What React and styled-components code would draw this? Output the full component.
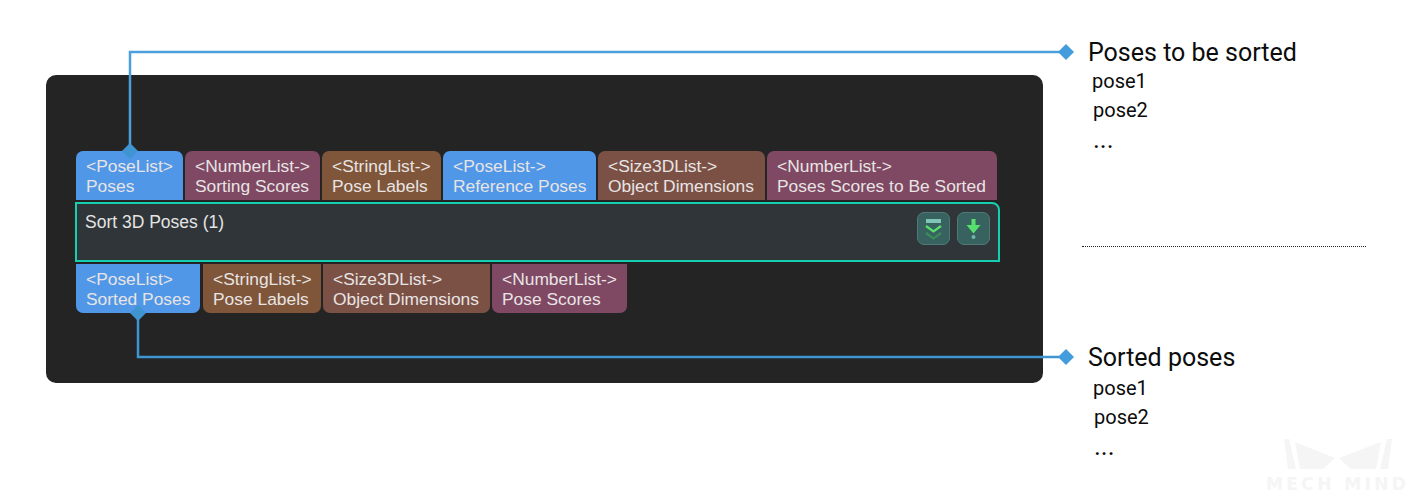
import React from "react";
import styled, { createGlobalStyle } from "styled-components";

const GlobalStyle = createGlobalStyle`
  html, body {
    margin: 0;
    padding: 0;
    background: #fff;
  }
`;

const colors = {
  pose: "#5097e8",
  number: "#7f4863",
  string: "#7f5639",
  size: "#7b5145"
};

const Page = styled.div`
  position: relative;
  display: flex;
  align-items: flex-start;
  width: 1413px;
  height: 496px;
  padding-left: 46px;
  box-sizing: border-box;
  overflow: hidden;
`;

const Panel = styled.div`
  display: flex;
  flex-direction: column;
  gap: 2px;
  width: 997px;
  height: 308px;
  margin-top: 75px;
  padding: 76px 0 0 29px;
  box-sizing: border-box;
  background: #242424;
  border-radius: 10px;
  font-family: "Liberation Sans", Arial, sans-serif;
`;

const TabRow = styled.div`
  display: flex;
  gap: 2px;
  padding-left: 1px;
`;

const Tab = styled.div`
  width: ${props => props.$width}px;
  height: 49px;
  margin-right: ${props => props.$after || 0}px;
  padding: 5px 0 0 10px;
  box-sizing: border-box;
  background: ${props => colors[props.$kind]};
  border-radius: ${props => (props.$bottom ? "0 0 7px 7px" : "7px 7px 0 0")};
  color: #e8e4e4;
  font-size: 17.4px;
  line-height: 20px;
  white-space: nowrap;
`;

const Node = styled.div`
  display: flex;
  justify-content: space-between;
  width: 925px;
  height: 60px;
  padding: 6px 8px 0 8px;
  box-sizing: border-box;
  background: #2f3539;
  border: 2px solid #15d0b0;
  border-radius: 0 8px 0 0;
`;

const NodeTitle = styled.div`
  color: #e4e4e4;
  font-size: 17.5px;
  line-height: 24px;
`;

const NodeButtons = styled.div`
  display: flex;
  gap: 7px;
  padding-top: 2px;
`;

const IconButton = styled.div`
  width: 33px;
  height: 33px;
  box-sizing: border-box;
  background: #37625f;
  border: 1px solid #4d7a76;
  border-radius: 7px;

  & svg {
    display: block;
  }
`;

const Notes = styled.div`
  width: 284px;
  margin-left: 39px;
  padding-top: 39px;
  font-family: Roboto, sans-serif;
  color: #0c0c0c;
`;

const NoteTitle = styled.div`
  padding-left: 6px;
  font-size: 25px;
  line-height: 28px;
`;

const NoteItems = styled.div`
  display: flex;
  flex-direction: column;
  padding-top: ${props => props.$top}px;
`;

const NoteItem = styled.div`
  padding-left: ${props => props.$indent}px;
  height: 29px;
  font-size: 20px;
  line-height: 29px;
`;

const NoteEllipsis = styled(NoteItem)`
  font-size: 26px;
  line-height: 29px;
`;

const Divider = styled.div`
  margin: 92px 0 97px;
  border-top: 1px dotted #222;
`;

const Connectors = styled.svg`
  position: absolute;
  left: 0;
  top: 0;
  pointer-events: none;
`;

const Watermark = styled.div`
  position: absolute;
  left: 1266px;
  top: 439px;
  width: 146px;

  & svg {
    display: block;
    margin-left: 18px;
  }
`;

const WatermarkText = styled.div`
  margin-top: 7px;
  color: #f5f5f5;
  font-family: "DejaVu Sans", sans-serif;
  font-size: 17px;
  font-weight: 700;
  line-height: 14px;
  letter-spacing: 3.400px;
  white-space: nowrap;
`;

const topTabs = [
  { kind: "pose", width: 107, type: "<PoseList>", name: "Poses" },
  { kind: "number", width: 135, type: "<NumberList->", name: "Sorting Scores" },
  { kind: "string", width: 119, type: "<StringList->", name: "Pose Labels" },
  { kind: "pose", width: 153, type: "<PoseList->", name: "Reference Poses" },
  { kind: "size", width: 167, type: "<Size3DList->", name: "Object Dimensions" },
  { kind: "number", width: 230, type: "<NumberList->", name: "Poses Scores to Be Sorted" }
];

const bottomTabs = [
  { kind: "pose", width: 124, after: 1, type: "<PoseList>", name: "Sorted Poses" },
  { kind: "string", width: 118, type: "<StringList->", name: "Pose Labels" },
  { kind: "size", width: 167, type: "<Size3DList->", name: "Object Dimensions" },
  { kind: "number", width: 135, type: "<NumberList->", name: "Pose Scores" }
];

const CollapseIcon = () => (
  <svg width="31" height="31" viewBox="0 0 31 31">
    <rect x="8" y="6" width="15" height="4" fill="#7fc4b4" />
    <path d="M8 13l7.500 5.500 7.500-5.500" fill="none" stroke="#58e06e" strokeWidth="2.200" />
    <path d="M8 20l7.500 5.500 7.500-5.500" fill="none" stroke="#3d8a5c" strokeWidth="2.200" />
  </svg>
);

const DownIcon = () => (
  <svg width="31" height="31" viewBox="0 0 31 31">
    <path d="M13.500 6h4v6h5l-7 8.500-7-8.500h5z" fill="#58e06e" />
    <circle cx="15.500" cy="24" r="2" fill="#6fb5a8" />
  </svg>
);

const App = () => (
  <Page>
    <GlobalStyle />
    <Panel>
      <TabRow>
        {topTabs.map(tab => (
          <Tab key={tab.name} $kind={tab.kind} $width={tab.width}>
            {tab.type}
            <br />
            {tab.name}
          </Tab>
        ))}
      </TabRow>
      <Node>
        <NodeTitle>Sort 3D Poses (1)</NodeTitle>
        <NodeButtons>
          <IconButton>
            <CollapseIcon />
          </IconButton>
          <IconButton>
            <DownIcon />
          </IconButton>
        </NodeButtons>
      </Node>
      <TabRow>
        {bottomTabs.map(tab => (
          <Tab key={tab.name} $kind={tab.kind} $width={tab.width} $after={tab.after} $bottom>
            {tab.type}
            <br />
            {tab.name}
          </Tab>
        ))}
      </TabRow>
    </Panel>
    <Notes>
      <NoteTitle>Poses to be sorted</NoteTitle>
      <NoteItems $top={0}>
        <NoteItem $indent={10}>pose1</NoteItem>
        <NoteItem $indent={11}>pose2</NoteItem>
        <NoteEllipsis $indent={11}>...</NoteEllipsis>
      </NoteItems>
      <Divider />
      <NoteTitle>Sorted poses</NoteTitle>
      <NoteItems $top={2}>
        <NoteItem $indent={11}>pose1</NoteItem>
        <NoteItem $indent={12}>pose2</NoteItem>
        <NoteEllipsis $indent={12}>...</NoteEllipsis>
      </NoteItems>
    </Notes>
    <Connectors width="1413" height="496" viewBox="0 0 1413 496">
      <path d="M130 146V52H1064" fill="none" stroke="#4a9fdc" strokeWidth="2.500" />
      <path d="M130 143l8 8-8 8-8-8z" fill="#3f94d2" />
      <path d="M1066 44l8 8-8 8-8-8z" fill="#439cdb" />
      <path d="M138 318V357H1064" fill="none" stroke="#3f94d2" strokeWidth="2.500" />
      <path d="M138 305l8 8-8 8-8-8z" fill="#3f94d2" />
      <path d="M1066 349l8 8-8 8-8-8z" fill="#439cdb" />
    </Connectors>
    <Watermark>
      <svg width="110" height="31" viewBox="0 0 110 31">
        <path d="M0 0h5l7 30H4z" fill="#f5f5f5" />
        <path d="M11 3l40 16-12 11H16z" fill="#f5f5f5" />
        <path d="M108 0h-5l-7 30h8z" fill="#f5f5f5" />
        <path d="M97 3L55 19l12 11h25z" fill="#f5f5f5" />
      </svg>
      <WatermarkText>MECH MIND</WatermarkText>
    </Watermark>
  </Page>
);

export default App;
